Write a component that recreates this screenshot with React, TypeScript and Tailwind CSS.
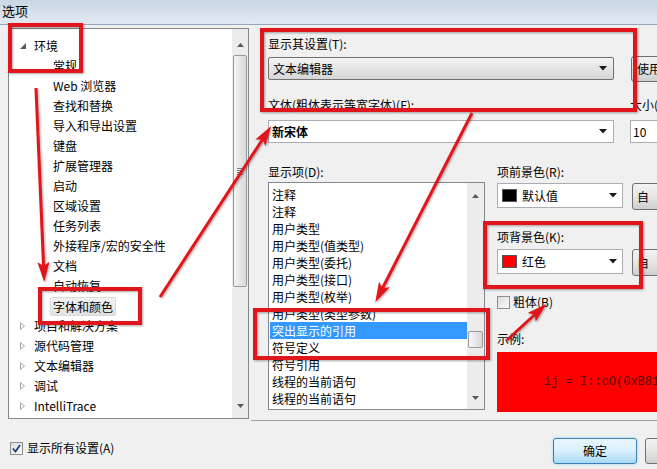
import React from "react";

const treeChildren = [
  "常规",
  "Web 浏览器",
  "查找和替换",
  "导入和导出设置",
  "键盘",
  "扩展管理器",
  "启动",
  "区域设置",
  "任务列表",
  "外接程序/宏的安全性",
  "文档",
  "自动恢复",
  "字体和颜色",
];

const treeRoots = ["项目和解决方案", "源代码管理", "文本编辑器", "调试", "IntelliTrace"];

const displayItems = [
  "注释",
  "注释",
  "用户类型",
  "用户类型(值类型)",
  "用户类型(委托)",
  "用户类型(接口)",
  "用户类型(枚举)",
  "用户类型(类型参数)",
  "突出显示的引用",
  "符号定义",
  "符号引用",
  "线程的当前语句",
  "线程的当前语句",
];

function DownArrow() {
  return (
    <svg width="8" height="5" viewBox="0 0 8 5">
      <path d="M0 0 L8 0 L4 4.5 Z" fill="#1a1a1a" />
    </svg>
  );
}

function ScrollArrow({ up }: { up?: boolean }) {
  return (
    <svg width="7" height="4" viewBox="0 0 7 4">
      <path d={up ? "M0 4 L7 4 L3.5 0 Z" : "M0 0 L7 0 L3.5 4 Z"} fill="#5a5a5a" />
    </svg>
  );
}

function Checkbox({ checked }: { checked?: boolean }) {
  return (
    <div className="flex h-[13px] w-[13px] items-center justify-center border border-[#8e8f8f] bg-gradient-to-br from-[#dcdcdc] to-[#fbfbfb]">
      {checked && (
        <svg width="9" height="9" viewBox="0 0 9 9">
          <path d="M1 4.5 L3.5 7.5 L8 1" fill="none" stroke="#21427c" strokeWidth="1.8" />
        </svg>
      )}
    </div>
  );
}

function WinButton({ label, className }: { label?: string; className: string }) {
  return (
    <div
      className={
        "flex shrink-0 items-center justify-center rounded-[3px] border border-[#707070] bg-gradient-to-b from-[#f2f2f2] via-[#e6e6e6] to-[#cfcfcf] " +
        className
      }
    >
      {label}
    </div>
  );
}

function Tree() {
  return (
    <div className="flex h-[391px] w-[241px] border border-[#828790] bg-white">
      <div className="flex-1 pt-[7px]">
        <div className="flex h-[20px] items-center pl-[11px] leading-[20px]">
          <div className="flex w-[14px] items-center">
            <svg width="6" height="6" viewBox="0 0 6 6">
              <path d="M6 0 L6 6 L0 6 Z" fill="#595959" />
            </svg>
          </div>
          <span>环境</span>
        </div>
        {treeChildren.map((t) => (
          <div key={t} className="flex h-[20px] items-center pl-[41px]">
            {t === "字体和颜色" ? (
              <span className="rounded-[2px] border border-[#d9d9d9] bg-gradient-to-b from-[#f2f2f2] to-[#e2e2e2] px-[2px] leading-[17px]">
                {t}
              </span>
            ) : (
              <span className="px-[3px] leading-[20px]">{t}</span>
            )}
          </div>
        ))}
        {treeRoots.map((t) => (
          <div key={t} className="flex h-[20px] items-center pl-[11px] leading-[20px]">
            <div className="flex w-[14px] items-center">
              <svg width="5" height="8" viewBox="0 0 5 8">
                <path d="M0.5 0.5 L4.5 4 L0.5 7.5 Z" fill="#fff" stroke="#a6a6a6" strokeWidth="1" />
              </svg>
            </div>
            <span>{t}</span>
          </div>
        ))}
      </div>
      <div className="flex w-[16px] flex-col bg-[#ececec]">
        <div className="flex h-[26px] items-center justify-center pt-[6px]">
          <ScrollArrow up />
        </div>
        <div className="mx-[1px] flex h-[232px] items-center justify-center rounded-[2px] border border-[#9a9a9a] bg-gradient-to-r from-[#f4f4f4] to-[#d9d9d9]">
          <div className="flex flex-col gap-[1px]">
            <div className="h-px w-[6px] bg-[#7d7d7d]" />
            <div className="h-px w-[6px] bg-[#7d7d7d]" />
            <div className="h-px w-[6px] bg-[#7d7d7d]" />
            <div className="h-px w-[6px] bg-[#7d7d7d]" />
          </div>
        </div>
        <div className="flex-1" />
        <div className="flex h-[24px] items-center justify-center">
          <ScrollArrow />
        </div>
      </div>
    </div>
  );
}

function DisplayList() {
  return (
    <div className="flex h-[228px] w-[217px] border border-[#828790] bg-white">
      <div className="flex-1 overflow-hidden pt-[3px]">
        {displayItems.map((t, i) => (
          <div
            key={i}
            className={
              "ml-[1px] h-[17px] pl-[2px] leading-[17px] " +
              (i === 8 ? "bg-[#3399ff] text-white" : "")
            }
          >
            {t}
          </div>
        ))}
      </div>
      <div className="flex w-[17px] flex-col bg-[#ececec]">
        <div className="flex h-[26px] items-center justify-center">
          <ScrollArrow up />
        </div>
        <div className="h-[122px]" />
        <div className="mx-[1px] h-[17px] rounded-[2px] border border-[#9a9a9a] bg-gradient-to-r from-[#f6f6f6] to-[#d8d8d8]" />
        <div className="flex-1" />
        <div className="flex h-[22px] items-center justify-center">
          <ScrollArrow />
        </div>
      </div>
    </div>
  );
}

function ColorCombo({ swatch, label }: { swatch: string; label: string }) {
  return (
    <div className="flex h-[25px] w-[126px] shrink-0 items-center border border-[#abadb3] bg-white pl-[4px] pr-[5px]">
      <div className={"h-[13px] w-[15px] border border-[#555] " + swatch} />
      <span className="ml-[5px] flex-1">{label}</span>
      <DownArrow />
    </div>
  );
}

function Annotations() {
  const red = "#e0151b";
  return (
    <svg className="pointer-events-none absolute inset-0" width="657" height="469" viewBox="0 0 657 469">
      <defs>
        <marker id="ah" markerWidth="20" markerHeight="12" refX="14" refY="6" orient="auto" markerUnits="userSpaceOnUse">
          <path d="M0 0 L20 6 L0 12 L4 6 Z" fill={red} />
        </marker>
        <filter id="sh" x="-10%" y="-10%" width="120%" height="120%">
          <feDropShadow dx="1" dy="1" stdDeviation="1" floodColor="#000" floodOpacity="0.35" />
        </filter>
      </defs>
      <g fill="none" stroke={red} strokeWidth="4" filter="url(#sh)">
        <rect x="10" y="25" width="71" height="46" />
        <rect x="40" y="289" width="100" height="34" />
        <rect x="262" y="30" width="373" height="80" />
        <rect x="255" y="310" width="233" height="48" />
        <rect x="485" y="223" width="156" height="64" />
      </g>
      <g stroke={red} strokeWidth="3" filter="url(#sh)">
        <line x1="36" y1="88" x2="44" y2="276" markerEnd="url(#ah)" />
        <line x1="160" y1="297" x2="268" y2="131" markerEnd="url(#ah)" />
        <line x1="472" y1="113" x2="378" y2="297" markerEnd="url(#ah)" />
        <line x1="507" y1="340" x2="542" y2="308" markerEnd="url(#ah)" />
      </g>
    </svg>
  );
}

export default function App() {
  return (
    <div className="relative h-[469px] w-[657px] overflow-hidden bg-[#f0f0f0] font-['Noto_Sans_CJK_SC',sans-serif] text-[12px] text-black">
      <div className="flex h-[25px] items-center border-b border-[#93a6bd] bg-gradient-to-b from-[#cbd7e5] to-[#e2e9f2] pl-[2px] pb-[3px] text-[13px]">
        选项
      </div>
      <div className="flex h-[444px]">
        <div className="flex w-[249px] shrink-0 flex-col pl-[8px] pt-[3px]">
          <Tree />
          <div className="mt-[22px] flex items-center gap-[4px] pl-[2px] leading-[14px]">
            <Checkbox checked />
            <span>显示所有设置(A)</span>
          </div>
        </div>
        <div className="flex w-[420px] shrink-0 flex-col pl-[19px]">
          <div className="mt-[11px] h-[16px] leading-[16px]">显示其设置(T):</div>
          <div className="mt-[4px] flex h-[26px] items-start">
            <div className="mt-[1px] flex h-[23px] w-[346px] shrink-0 items-center rounded-[2px] border border-[#707070] bg-gradient-to-b from-[#f4f4f4] to-[#d6d6d6] pl-[4px] pr-[6px]">
              <span className="flex-1">文本编辑器</span>
              <DownArrow />
            </div>
            <WinButton label="使用" className="ml-[17px] h-[26px] w-[70px] justify-start pl-[5px]" />
          </div>
          <div className="mt-[15px] flex h-[16px] leading-[16px]">
            <span className="w-[362px] shrink-0">文体(粗体表示等宽字体)(F):</span>
            <span>大小(</span>
          </div>
          <div className="mt-[7px] flex h-[23px]">
            <div className="flex h-[23px] w-[346px] shrink-0 items-center border border-[#abadb3] bg-white pl-[3px] pr-[6px]">
              <span className="flex-1 font-bold">新宋体</span>
              <DownArrow />
            </div>
            <div className="ml-[16px] flex h-[23px] w-[60px] shrink-0 items-center border border-[#abadb3] bg-white pl-[2px]">
              10
            </div>
          </div>
          <div className="mt-[21px] flex">
            <div className="flex w-[217px] shrink-0 flex-col">
              <div className="h-[16px] leading-[16px]">显示项(D):</div>
              <div className="mt-[2px]">
                <DisplayList />
              </div>
            </div>
            <div className="ml-[12px] flex flex-col">
              <div className="h-[16px] leading-[16px]">项前景色(R):</div>
              <div className="mt-[3px] flex items-start">
                <ColorCombo swatch="bg-black" label="默认值" />
                <WinButton label="自" className="ml-[9px] h-[27px] w-[40px] justify-start pl-[4px]" />
              </div>
              <div className="mt-[19px] h-[16px] leading-[16px]">项背景色(K):</div>
              <div className="mt-[4px] flex items-start">
                <ColorCombo swatch="bg-[#ff0000]" label="红色" />
                <WinButton label="自" className="ml-[9px] h-[27px] w-[40px] justify-start pl-[4px]" />
              </div>
              <div className="mt-[19px] flex h-[14px] items-center gap-[3px] leading-[14px]">
                <Checkbox />
                <span>粗体(B)</span>
              </div>
              <div className="mt-[22px] h-[16px] leading-[16px]">示例:</div>
              <div className="mt-[5px] flex h-[60px] w-[260px] items-center whitespace-nowrap bg-[#ff0000] pl-[47px] font-['Liberation_Mono',monospace] text-[12px] text-[#5a0c0c]">
                ij = I::oO(0xB81l);
              </div>
            </div>
          </div>
          <div className="-ml-[17px] mt-[8px] h-[2px] border-t border-[#a0a0a0] border-b-white" />
          <div className="mt-[16px] flex pl-[285px]">
            <div className="flex h-[26px] w-[84px] shrink-0 items-center justify-center rounded-[3px] border border-[#3c7fb1] bg-gradient-to-b from-[#eaf6fd] via-[#d9f0fc] to-[#a7d9f5] shadow-[0_0_3px_#8fd3f9]">
              确定
            </div>
            <WinButton className="ml-[8px] h-[26px] w-[84px]" />
          </div>
        </div>
      </div>
      <Annotations />
    </div>
  );
}
